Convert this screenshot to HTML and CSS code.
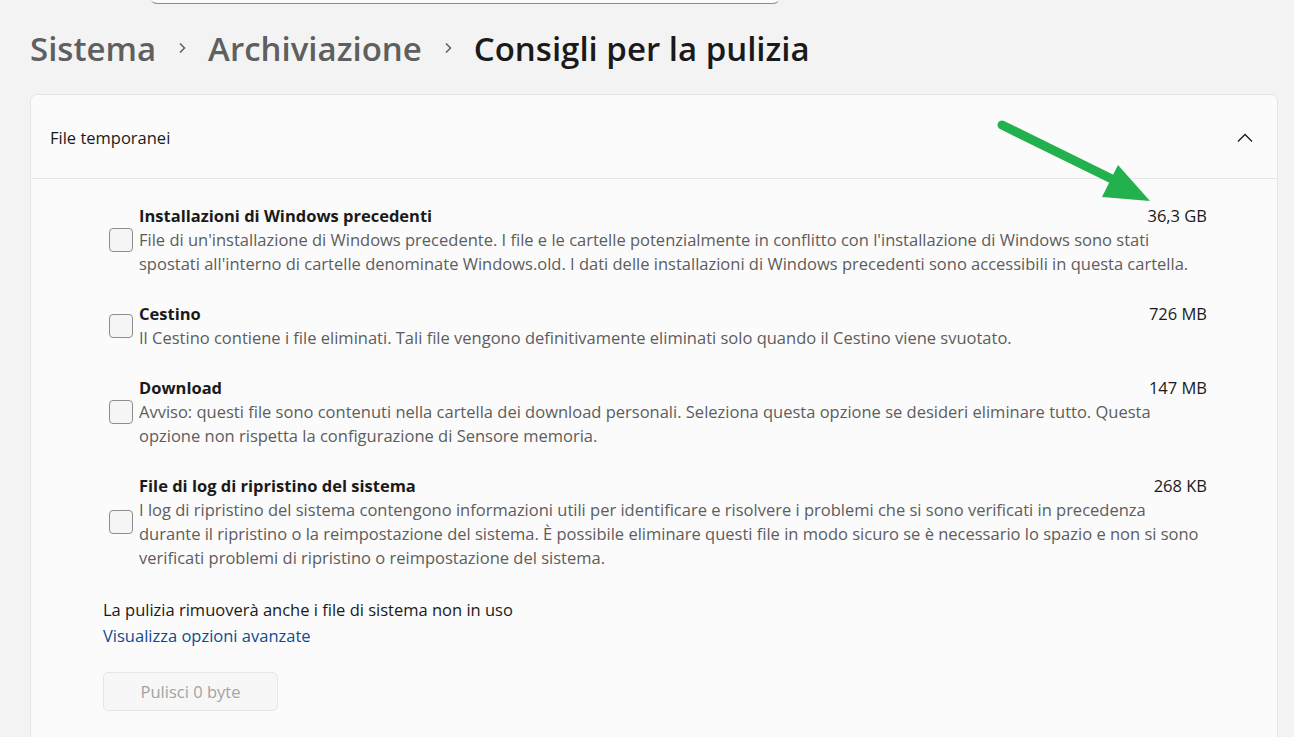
FILE: index.html
```html
<!DOCTYPE html>
<html lang="it">
<head>
    <meta charset="UTF-8">
    <meta name="viewport" content="width=device-width, initial-scale=1.0">
    <title>Consigli per la pulizia</title>
    <link rel="stylesheet" href="styles.css">
</head>
<body>
<div class="search-box"></div>

<div class="breadcrumb">
    <span class="crumb">Sistema</span>
    <svg class="crumb-sep" width="10" height="12" viewBox="0 0 10 12"><polyline points="3,1.5 7.5,6 3,10.5" fill="none" stroke="#5f5f5f" stroke-width="1.5"/></svg>
    <span class="crumb">Archiviazione</span>
    <svg class="crumb-sep" width="10" height="12" viewBox="0 0 10 12"><polyline points="3,1.5 7.5,6 3,10.5" fill="none" stroke="#5f5f5f" stroke-width="1.5"/></svg>
    <span class="crumb current">Consigli per la pulizia</span>
</div>

<div class="card">
    <div class="card-header">
        <span>File temporanei</span>
        <svg width="16" height="10" viewBox="0 0 16 10"><polyline points="1,8.5 8,1.5 15,8.5" fill="none" stroke="#1a1a1a" stroke-width="1.3"/></svg>
    </div>

    <div class="items">
        <div class="item">
            <span class="checkbox"></span>
            <div class="item-text">
                <div class="item-top">
                    <span class="item-title">Installazioni di Windows precedenti</span>
                    <span class="item-size">36,3 GB</span>
                </div>
                <p class="item-desc">File di un'installazione di Windows precedente. I file e le cartelle potenzialmente in conflitto con l'installazione di Windows sono stati spostati all'interno di cartelle denominate Windows.old. I dati delle installazioni di Windows precedenti sono accessibili in questa cartella.</p>
            </div>
        </div>

        <div class="item">
            <span class="checkbox"></span>
            <div class="item-text">
                <div class="item-top">
                    <span class="item-title">Cestino</span>
                    <span class="item-size">726 MB</span>
                </div>
                <p class="item-desc">Il Cestino contiene i file eliminati. Tali file vengono definitivamente eliminati solo quando il Cestino viene svuotato.</p>
            </div>
        </div>

        <div class="item">
            <span class="checkbox"></span>
            <div class="item-text">
                <div class="item-top">
                    <span class="item-title">Download</span>
                    <span class="item-size">147 MB</span>
                </div>
                <p class="item-desc">Avviso: questi file sono contenuti nella cartella dei download personali. Seleziona questa opzione se desideri eliminare tutto. Questa opzione non rispetta la configurazione di Sensore memoria.</p>
            </div>
        </div>

        <div class="item">
            <span class="checkbox"></span>
            <div class="item-text">
                <div class="item-top">
                    <span class="item-title">File di log di ripristino del sistema</span>
                    <span class="item-size">268 KB</span>
                </div>
                <p class="item-desc">I log di ripristino del sistema contengono informazioni utili per identificare e risolvere i problemi che si sono verificati in precedenza durante il ripristino o la reimpostazione del sistema. È possibile eliminare questi file in modo sicuro se è necessario lo spazio e non si sono verificati problemi di ripristino o reimpostazione del sistema.</p>
            </div>
        </div>
    </div>

    <div class="card-footer">
        <p>La pulizia rimuoverà anche i file di sistema non in uso</p>
        <a href="#" class="link">Visualizza opzioni avanzate</a>
        <button type="button" class="clean-button" disabled>Pulisci 0 byte</button>
    </div>
</div>

<!-- freccia verde sopra lo screenshot -->
<svg class="arrow" width="1294" height="737" viewBox="0 0 1294 737">
    <line x1="1002" y1="125" x2="1118" y2="182" stroke="#22b14c" stroke-width="9" stroke-linecap="round"/>
    <polygon points="1118,165 1102,197 1150,201" fill="#22b14c"/>
</svg>
</body>
</html>
```

FILE: styles.css
```css
* {
    margin: 0;
    padding: 0;
    box-sizing: border-box;
}

body {
    font-family: "Segoe UI", "Open Sans", sans-serif;
    background-color: #f3f3f3;
    color: #1a1a1a;
    position: relative;
    min-height: 737px;
    overflow: hidden;
}

/* Casella di ricerca, tagliata in alto */
.search-box {
    width: 630px;
    height: 36px;
    margin-top: -32px;
    margin-left: 150px;
    background-color: #fbfbfb;
    border: 1px solid #e2e2e2;
    border-bottom-color: #8a8a8a;
    border-radius: 7px;
}

/* Percorso */
.breadcrumb {
    display: flex;
    align-items: center;
    padding-left: 30px;
    margin-top: 22px;
    height: 44px;
    font-size: 33px;
    font-weight: 600;
}

.crumb {
    color: #5f5f5f;
}

.crumb.current {
    color: #1a1a1a;
}

.crumb-sep {
    margin: 0 21px;
}

/* Scheda */
.card {
    margin: 24px 16px 0 30px;
    background-color: #fbfbfb;
    border: 1px solid #e5e5e5;
    border-radius: 7px;
    min-height: 660px;
}

.card-header {
    height: 84px;
    display: flex;
    align-items: center;
    justify-content: space-between;
    padding: 2px 24px 0 19px;
    font-size: 16.5px;
    border-bottom: 1px solid #e5e5e5;
}

.items {
    padding: 25px 70px 0 78px;
}

.item {
    display: flex;
    align-items: center;
    margin-bottom: 26px;
}

.checkbox {
    flex: none;
    width: 24px;
    height: 24px;
    border: 1px solid #8d8d8d;
    border-radius: 4px;
    background-color: #f5f5f5;
}

.item-text {
    flex: 1;
    margin-left: 6px;
    font-size: 16.5px;
    line-height: 24px;
}

.item-top {
    display: flex;
    justify-content: space-between;
}

.item-title {
    font-weight: 700;
}

.item-desc {
    color: #5d5d5d;
}

.card-footer {
    padding: 1px 0 24px 72px;
    font-size: 16.5px;
    line-height: 26px;
}

.link {
    display: block;
    color: #0e4c92;
    text-decoration: none;
}

.clean-button {
    margin-top: 23px;
    width: 175px;
    height: 39px;
    font-family: inherit;
    font-size: 16.5px;
    color: #a3a3a3;
    background-color: #f7f7f7;
    border: 1px solid #e6e6e6;
    border-radius: 5px;
}

.arrow {
    position: absolute;
    top: 0;
    left: 0;
    pointer-events: none;
}
```
